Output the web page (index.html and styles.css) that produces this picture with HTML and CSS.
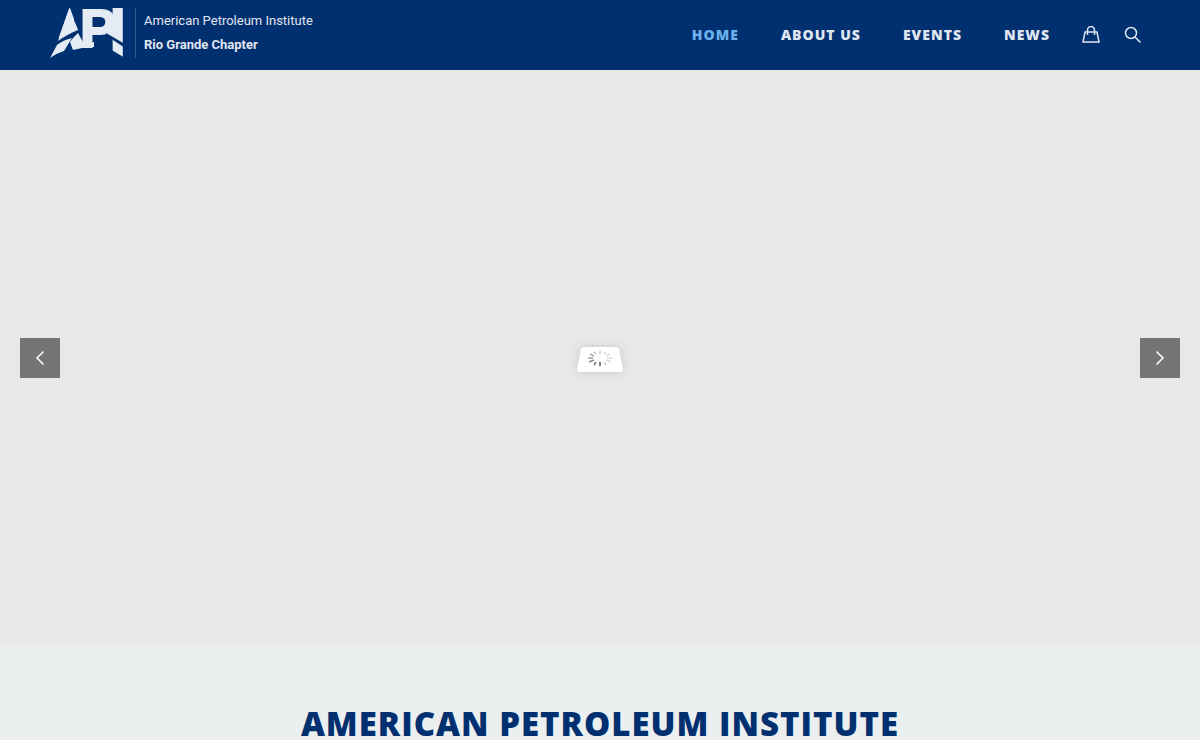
FILE: index.html
```
<!doctype html>
<html lang="en">
<head>
    <meta charset="UTF-8">
    <meta name="viewport" content="width=device-width, initial-scale=1.0">
    <title>American Petroleum Institute - Rio Grande Chapter</title>
    <link rel="stylesheet" href="styles.css">
</head>
<body>
    <header class="site-header">
        <a class="logo" href="#">
            <svg class="logo-mark" viewBox="0 0 76 50" width="76" height="50" aria-label="API">
                <text x="0" y="49" font-size="70">A</text>
                <!-- sharpen the peak, fill the middle, swoosh feet -->
                <path class="logo-cut" d="M0 0H19L8 31L0 36zM20 0H36V42L28 22zM0 34L29 21L50 36V50H0z"/>
                <path d="M19 1L8 33Q16 27 28 22L27 19z"/>
                <path d="M0 50L7 37Q13 32 22 30L14 43Q7 45 0 50z"/>
                <path d="M23 30L28 25L34 36L44 34V39Q33 39 23 42L20 34z"/>
                <text x="30" y="39" font-size="54" class="logo-heavy">P</text>
                <text x="58" y="49" font-size="70">I</text>
                <path d="M61 12H64V32L56 27z"/>
                <g class="logo-cut">
                    <path d="M56 25L75 36V40L60 30L56 32z"/>
                    <path d="M60 41L75 50V52H60z"/>
                </g>
            </svg>
            <span class="logo-text">
                <span>American Petroleum Institute</span>
                <strong>Rio Grande Chapter</strong>
            </span>
        </a>
        <nav class="main-nav">
            <a class="active" href="#">HOME</a>
            <a href="#">ABOUT US</a>
            <a href="#">EVENTS</a>
            <a href="#">NEWS</a>
            <div class="nav-icons">
                <a href="#" aria-label="Cart">
                    <svg viewBox="0 0 18 18" width="18" height="18">
                        <path d="M3 6H15L17 16H1zM5.5 9V4a3.5 3.5 0 0 1 7 0V9"/>
                    </svg>
                </a>
                <button type="button" aria-label="Search">
                    <svg viewBox="0 0 18 18" width="18" height="18">
                        <circle cx="7" cy="7" r="5.5"/>
                        <path d="M11 11L16.5 16.5"/>
                    </svg>
                </button>
            </div>
        </nav>
    </header>

    <section class="slider">
        <button class="arrow" type="button" aria-label="Previous">
            <svg viewBox="0 0 20 20" width="20" height="20"><path d="M13.5 3.5L7 10L13.5 16.5"/></svg>
        </button>
        <svg class="loader" viewBox="0 0 70 50" width="70" height="50" aria-label="Loading">
            <path class="loader-box" d="M19 14H51Q53 14 54 16L58 37Q58 39 56 39H14Q12 39 12 37L16 16Q17 14 19 14z"/>
            <g class="loader-spokes">
                <path opacity=".35" d="M35 18V21"/>
                <path opacity=".25" d="M41 19L39 21"/>
                <path opacity=".2" d="M45 21L41 23"/>
                <path opacity=".2" d="M47 25H42"/>
                <path opacity=".2" d="M46 29L41 27"/>
                <path opacity=".25" d="M41 32L39 29"/>
                <path opacity="1" d="M35 33V29"/>
                <path opacity=".8" d="M29 32L31 29"/>
                <path opacity=".7" d="M24 29L29 27"/>
                <path opacity=".6" d="M23 25H28"/>
                <path opacity=".5" d="M25 21L29 23"/>
                <path opacity=".4" d="M29 19L31 21"/>
            </g>
        </svg>
        <button class="arrow" type="button" aria-label="Next">
            <svg viewBox="0 0 20 20" width="20" height="20"><path d="M6.5 3.5L13 10L6.5 16.5"/></svg>
        </button>
    </section>

    <main class="intro">
        <h1>AMERICAN PETROLEUM INSTITUTE</h1>
    </main>
</body>
</html>
```
FILE: styles.css
```
* {
    box-sizing: border-box;
}
body {
    margin: 0;
    font-family: "Open Sans", sans-serif;
    background: #ebeff0;
}
a {
    color: inherit;
    text-decoration: none;
}
button {
    border: 0;
    padding: 0;
    background: none;
    color: inherit;
    cursor: pointer;
}
svg {
    display: block;
    fill: none;
    stroke: currentColor;
}
.site-header {
    height: 70px;
    padding: 0 50px;
    display: flex;
    align-items: center;
    justify-content: space-between;
    background: #003070;
    color: #e0e6f0;
}
.logo {
    display: flex;
    align-items: center;
    gap: 9px;
    padding-bottom: 4px;
}
.logo-mark {
    overflow: visible;
    fill: #e4ebf5;
    stroke: none;
    font-family: "Liberation Sans", Arial, sans-serif;
    font-weight: 700;
}
.logo-heavy {
    stroke: #e4ebf5;
    stroke-width: 2;
}
.logo-cut {
    fill: #003070;
}
.logo-text {
    height: 50px;
    padding: 1px 0 0 8px;
    border-left: 1px solid #32588c;
    display: flex;
    flex-direction: column;
    font-family: Roboto, sans-serif;
    font-size: 13px;
    line-height: 24px;
}
.main-nav {
    display: flex;
    align-items: center;
    gap: 42px;
    font-size: 14px;
    font-weight: 800;
    letter-spacing: 1px;
}
.main-nav > a {
    padding-bottom: 2px;
}
.main-nav .active {
    color: #6cb0ee;
}
.nav-icons {
    display: flex;
    gap: 24px;
    padding-right: 8px;
    margin-left: -10px;
    stroke-width: 1.5;
}
.slider {
    height: calc(100vh - 165px);
    padding: 0 20px;
    display: flex;
    align-items: center;
    justify-content: space-between;
    background: #e8e8e8;
}
.arrow {
    width: 40px;
    height: 40px;
    display: grid;
    place-items: center;
    background: #747474;
    color: #fff;
    stroke-width: 1.5;
}
.loader-box {
    fill: #fff;
    stroke: none;
    filter: drop-shadow(0 0 5px rgba(0, 0, 0, 0.15));
}
.loader-spokes {
    stroke: #555;
    stroke-width: 1.5;
}
.intro {
    padding: 56px 20px;
    text-align: center;
}
.intro h1 {
    margin: 0;
    font-size: 33px;
    font-weight: 800;
    line-height: 46px;
    letter-spacing: 1px;
    color: #003070;
}
```
